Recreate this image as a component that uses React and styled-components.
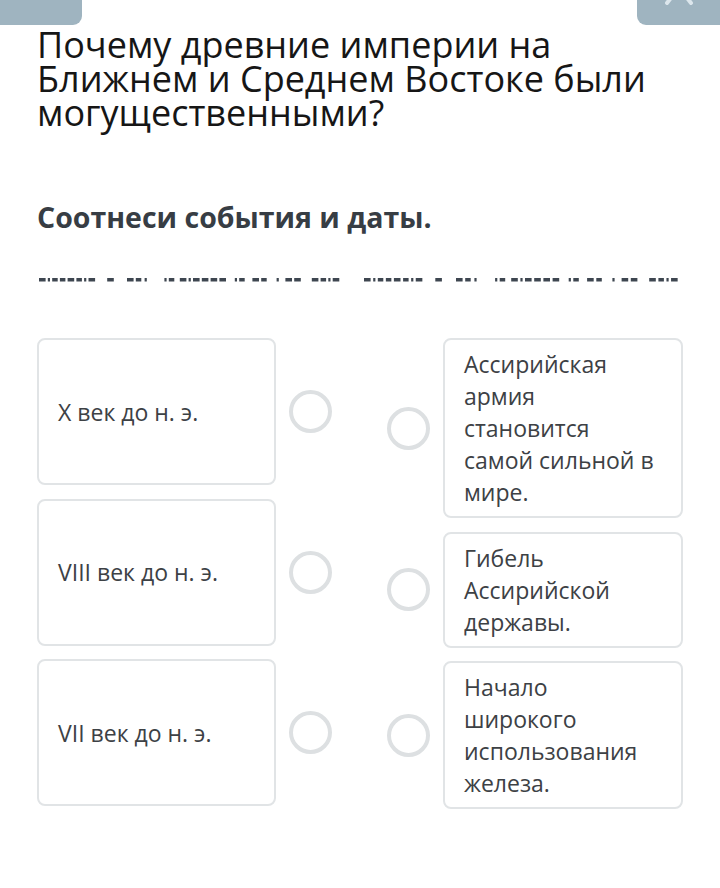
import React from "react";
import styled, { createGlobalStyle } from "styled-components";

const Global = createGlobalStyle`
  html, body { margin: 0; padding: 0; background: #ffffff; }
  body { font-family: "Open Sans", "Noto Sans", sans-serif; }
`;

const Page = styled.div`
  width: 720px;
  min-height: 888px;
  background: #ffffff;
  overflow: hidden;
`;

const TopBar = styled.div`
  display: flex;
  justify-content: space-between;
  height: 25px;
`;

const Tab = styled.div`
  width: ${(p) => p.$w}px;
  height: 25px;
  background: #9fb4c0;
  border-radius: ${(p) => (p.$side === "left" ? "0 0 9px 0" : "0 0 0 9px")};
  display: flex;
  justify-content: center;
  align-items: flex-start;
  overflow: hidden;
`;

const Content = styled.div`
  padding: 0 37px;
`;

const Title = styled.h1`
  margin: 3px 0 0;
  font-family: "Open Sans", sans-serif;
  font-weight: 400;
  font-size: 36px;
  line-height: 34px;
  letter-spacing: 0;
  color: #161616;
`;

const Subtitle = styled.h2`
  margin: 69px 0 0;
  font-family: "Open Sans", sans-serif;
  font-weight: 700;
  font-size: 28.5px;
  line-height: 36px;
  letter-spacing: 0;
  color: #373d44;
`;

const DashLine = styled.svg`
  display: block;
  margin-top: 42px;
  margin-left: -37px;
`;

const Board = styled.div`
  display: grid;
  grid-template-columns: 295px 296px;
  column-gap: 55px;
  margin-top: 56px;
  align-items: start;
`;

const Column = styled.div`
  display: flex;
  flex-direction: column;
  gap: 13.5px;
`;

const Item = styled.div`
  display: flex;
  align-items: center;
  gap: ${(p) => p.$gap}px;
`;

const Card = styled.div`
  box-sizing: border-box;
  width: 240px;
  ${(p) => (p.$fixed ? `height: ${p.$fixed}px;` : "")}
  border: 2px solid #e1e4e6;
  border-radius: 8px;
  padding: 8px 19px 8px 19px;
  display: flex;
  align-items: center;
  font-family: "Open Sans", sans-serif;
  font-size: 23px;
  line-height: 32px;
  letter-spacing: 0;
  color: #3d4145;
  background: #ffffff;
`;

const Dot = styled.div`
  box-sizing: border-box;
  width: 43px;
  height: 43px;
  flex: 0 0 43px;
  border-radius: 50%;
  border: 4px solid #dde0e2;
  background: #ffffff;
`;

/* segment pattern: [start, width], relative to group start */
const group = [
  [0, 6], [8, 2],
  [12, 5], [19, 5],
  [26, 6], [34, 5], [41, 2], [45, 6],
  [62, 6],
  [80, 6], [88, 5], [96, 2],
  [114, 2], [118, 5],
  [128, 6], [136, 2], [140, 6], [148, 6], [156, 6], [164, 6],
  [178, 2], [182, 5],
  [194, 6], [202, 5],
  [216, 2],
  [224, 6], [232, 6],
  [248, 6], [256, 5], [263, 2], [267, 6],
];

const place = (start, scale) =>
  group.map(([a, w]) => [start + a * scale, w * Math.min(scale, 1.1)]);

const segments = [...place(39, 1.1), ...place(364, 1.15)];

const leftItems = ["X век до н. э.", "VIII век до н. э.", "VII век до н. э."];
const rightItems = [
  "Ассирийская армия становится самой сильной в мире.",
  "Гибель Ассирийской державы.",
  "Начало широкого использования железа.",
];

export default function App() {
  return (
    <Page>
      <Global />
      <TopBar>
        <Tab $w={82} $side="left" />
        <Tab $w={83} $side="right">
          <svg width="30" height="6" viewBox="0 0 30 6">
            <path d="M10 -6 L3 3 M20 -6 L27 3" stroke="#dce6ec" strokeWidth="4" strokeLinecap="round" fill="none" />
          </svg>
        </Tab>
      </TopBar>
      <Content>
        <Title>
          Почему древние империи на
          <br />
          Ближнем и Среднем Востоке были
          <br />
          могущественными?
        </Title>
        <Subtitle>Соотнеси события и даты.</Subtitle>
        <DashLine width="720" height="5" viewBox="0 0 720 5">
          {segments.map(([a, w], i) => (
            <rect key={i} x={a} y={1} width={w} height={3.5} fill="#3e4650" />
          ))}
        </DashLine>
        <Board>
          <Column>
            {leftItems.map((t) => (
              <Item key={t} $gap={13}>
                <Card $fixed={147}>{t}</Card>
                <Dot />
              </Item>
            ))}
          </Column>
          <Column>
            {rightItems.map((t) => (
              <Item key={t} $gap={13}>
                <Dot />
                <Card>{t}</Card>
              </Item>
            ))}
          </Column>
        </Board>
      </Content>
    </Page>
  );
}
